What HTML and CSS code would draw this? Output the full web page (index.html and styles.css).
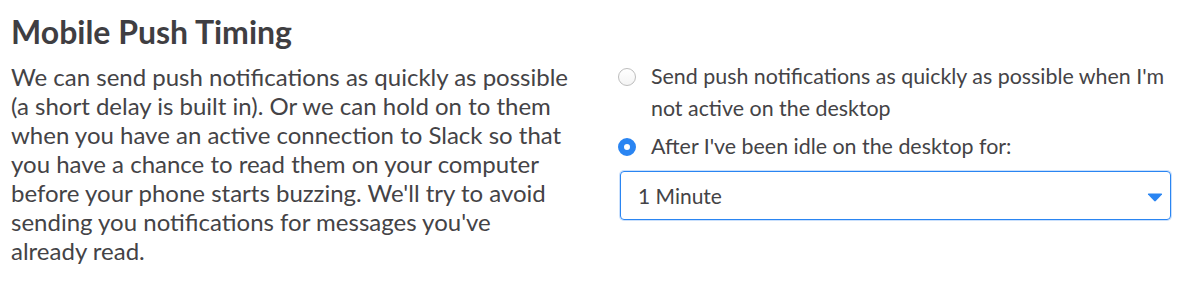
FILE: index.html
```html
<!DOCTYPE html>
<html>
<head>
    <title>Mobile Push Timing</title>
    <link rel="stylesheet" href="styles.css">
</head>
<body>
    <div class="section">
        <h2 class="title">Mobile Push Timing</h2>
        <div class="row">
            <p class="description">
                We can send push notifications as quickly as possible
                (a short delay is built in). Or we can hold on to them
                when you have an active connection to Slack so that
                you have a chance to read them on your computer
                before your phone starts buzzing. We'll try to avoid
                sending you notifications for messages you've
                already read.
            </p>
            <div class="options">
                <label class="option">
                    <span class="radio"></span>
                    <span class="option-text">Send push notifications as quickly as possible when I'm not active on the desktop</span>
                </label>
                <label class="option">
                    <span class="radio checked"></span>
                    <span class="option-text">After I've been idle on the desktop for:</span>
                </label>
                <div class="select">
                    <span>1 Minute</span>
                    <svg class="caret" width="16" height="9" viewBox="0 0 16 9">
                        <path d="M1 1.5 Q0.5 0.5 1.8 0.5 L14.2 0.5 Q15.5 0.5 15 1.5 L8.8 8 Q8 8.8 7.2 8 Z" fill="#2a85f2"/>
                    </svg>
                </div>
            </div>
        </div>
    </div>
</body>
</html>
```

FILE: styles.css
```css
body {
    margin: 0;
    background: #fff;
    font-family: Lato, "Noto Sans", sans-serif;
    color: #444346;
}

.section {
    padding: 10px 0 0 11px;
}

.title {
    margin: 0;
    font-size: 32px;
    font-weight: 700;
    line-height: 44px;
    color: #3f3e42;
}

.row {
    display: flex;
}

.description {
    flex: none;
    width: 558px;
    margin: 8px 0 0;
    font-size: 24px;
    line-height: 29px;
}

.options {
    width: 553px;
    margin: 6px 0 0 49px;
}

.option {
    display: flex;
    align-items: flex-start;
    font-size: 21.4px;
    line-height: 32px;
    margin-bottom: 6px;
}

.option-text {
    width: 530px;
}

.radio {
    flex: none;
    width: 18px;
    height: 18px;
    margin: 8px 15px 0 0;
    border: 1px solid #bdbdbd;
    border-radius: 50%;
    box-sizing: border-box;
    background: linear-gradient(#fff, #f4f4f4);
}

.radio.checked {
    border: 6px solid #2a85f2;
    background: #fff;
}

.select {
    display: flex;
    align-items: center;
    justify-content: space-between;
    height: 49px;
    margin: 9px 0 0 2px;
    padding: 0 7px 0 17px;
    border: 1px solid #2a85f2;
    border-radius: 4px;
    box-sizing: border-box;
    font-size: 21px;
    box-shadow: 0 0 0 1px rgba(42, 133, 242, 0.25);
}

.caret {
    margin-top: 3px;
}
```
